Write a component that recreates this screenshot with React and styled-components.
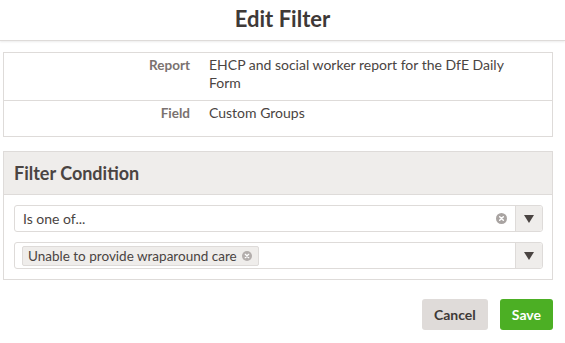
import React from 'react';
import styled, { createGlobalStyle } from 'styled-components';

const GlobalStyle = createGlobalStyle`
  html, body {
    margin: 0;
    padding: 0;
    background: #fff;
  }
  body {
    font-family: "Lato", "Open Sans", sans-serif;
    color: #4a4442;
  }
`;

const Page = styled.div`
  width: 565px;
  height: 343px;
  overflow: hidden;
`;

const Header = styled.header`
  height: 40px;
  display: flex;
  align-items: center;
  justify-content: center;
  border-bottom: 1px solid #dedbd9;
  box-shadow: 0 1px 2px rgba(0, 0, 0, 0.08);
`;

const Title = styled.h1`
  margin: 0;
  font-size: 22px;
  font-weight: 700;
  color: #3e3937;
  padding-bottom: 4px;
`;

const Body = styled.div`
  padding: 11px 12px 0 3px;
`;

const InfoTable = styled.div`
  border: 1px solid #dedbd9;
  padding-bottom: 6px;
`;

const InfoRow = styled.div`
  display: grid;
  grid-template-columns: 186px 300px;
  column-gap: 19px;
  padding: 3px 0 8px;
  font-size: 14px;
  line-height: 18px;
  border-top: ${p => (p.$first ? 'none' : '1px solid #dedbd9')};
`;

const Label = styled.div`
  text-align: right;
  font-weight: 700;
  font-size: 13.5px;
  color: #7a7270;
`;

const Value = styled.div`
  color: #4a4442;
`;

const Panel = styled.section`
  margin-top: 14px;
  border: 1px solid #dedbd9;
`;

const PanelHead = styled.div`
  height: 42px;
  display: flex;
  align-items: center;
  padding: 0 10px;
  background: #efedeb;
  border-bottom: 1px solid #dedbd9;
`;

const PanelTitle = styled.h2`
  margin: 0;
  font-size: 18px;
  font-weight: 700;
  color: #4a4442;
`;

const PanelBody = styled.div`
  display: flex;
  flex-direction: column;
  gap: 10px;
  padding: 10px 9px 10px 10px;
`;

const Select = styled.div`
  height: 25px;
  display: flex;
  align-items: stretch;
  border: 1px solid #dedbd9;
  border-radius: 3px;
  background: #fff;
`;

const SelectValue = styled.div`
  flex: 1;
  display: flex;
  align-items: center;
  padding: 0 ${p => (p.$multi ? '7px' : '8px')};
  font-size: 14px;
  color: #4a4442;
`;

const ClearIcon = styled.span`
  display: flex;
  align-items: center;
  padding-right: 8px;
`;

const ArrowBox = styled.div`
  width: 26px;
  display: flex;
  align-items: center;
  justify-content: center;
  background: #efedeb;
  border-left: 1px solid #dedbd9;
  border-radius: 0 3px 3px 0;
`;

const Tag = styled.span`
  display: inline-flex;
  align-items: center;
  gap: 5px;
  height: 18px;
  padding: 0 6px 0 5px;
  background: #efedeb;
  border: 1px solid #dedbd9;
  border-radius: 2px;
  font-size: 13.5px;
  color: #4a4442;
`;

const Actions = styled.div`
  display: flex;
  justify-content: flex-end;
  gap: 12px;
  padding: 19px 0 0;
`;

const Button = styled.button`
  height: 31px;
  padding: 0 ${p => (p.$primary ? '12px' : '12px')};
  min-width: ${p => (p.$primary ? '52px' : '65px')};
  border: none;
  border-radius: 3px;
  font-family: inherit;
  font-size: 14px;
  font-weight: 700;
  cursor: pointer;
  background: ${p => (p.$primary ? '#4caf24' : '#dfdbd9')};
  color: ${p => (p.$primary ? '#fff' : '#3e3937')};
`;

const CircleX = ({ size = 11, color = '#a9a4a2' }) => (
  <svg width={size} height={size} viewBox="0 0 12 12">
    <circle cx="6" cy="6" r="6" fill={color} />
    <path d="M4 4l4 4M8 4l-4 4" stroke="#fff" strokeWidth="1.6" strokeLinecap="round" />
  </svg>
);

const Caret = () => (
  <svg width="10" height="8" viewBox="0 0 10 8">
    <path d="M0 0h10L5 8z" fill="#4a4442" />
  </svg>
);

export default function App() {
  return (
    <Page>
      <GlobalStyle />
      <Header>
        <Title>Edit Filter</Title>
      </Header>
      <Body>
        <InfoTable>
          <InfoRow $first>
            <Label>Report</Label>
            <Value>EHCP and social worker report for the DfE Daily Form</Value>
          </InfoRow>
          <InfoRow>
            <Label>Field</Label>
            <Value>Custom Groups</Value>
          </InfoRow>
        </InfoTable>

        <Panel>
          <PanelHead>
            <PanelTitle>Filter Condition</PanelTitle>
          </PanelHead>
          <PanelBody>
            <Select>
              <SelectValue>Is one of...</SelectValue>
              <ClearIcon>
                <CircleX />
              </ClearIcon>
              <ArrowBox>
                <Caret />
              </ArrowBox>
            </Select>
            <Select>
              <SelectValue $multi>
                <Tag>
                  Unable to provide wraparound care
                  <CircleX size={10} color="#b3aeac" />
                </Tag>
              </SelectValue>
              <ArrowBox>
                <Caret />
              </ArrowBox>
            </Select>
          </PanelBody>
        </Panel>

        <Actions>
          <Button>Cancel</Button>
          <Button $primary>Save</Button>
        </Actions>
      </Body>
    </Page>
  );
}
